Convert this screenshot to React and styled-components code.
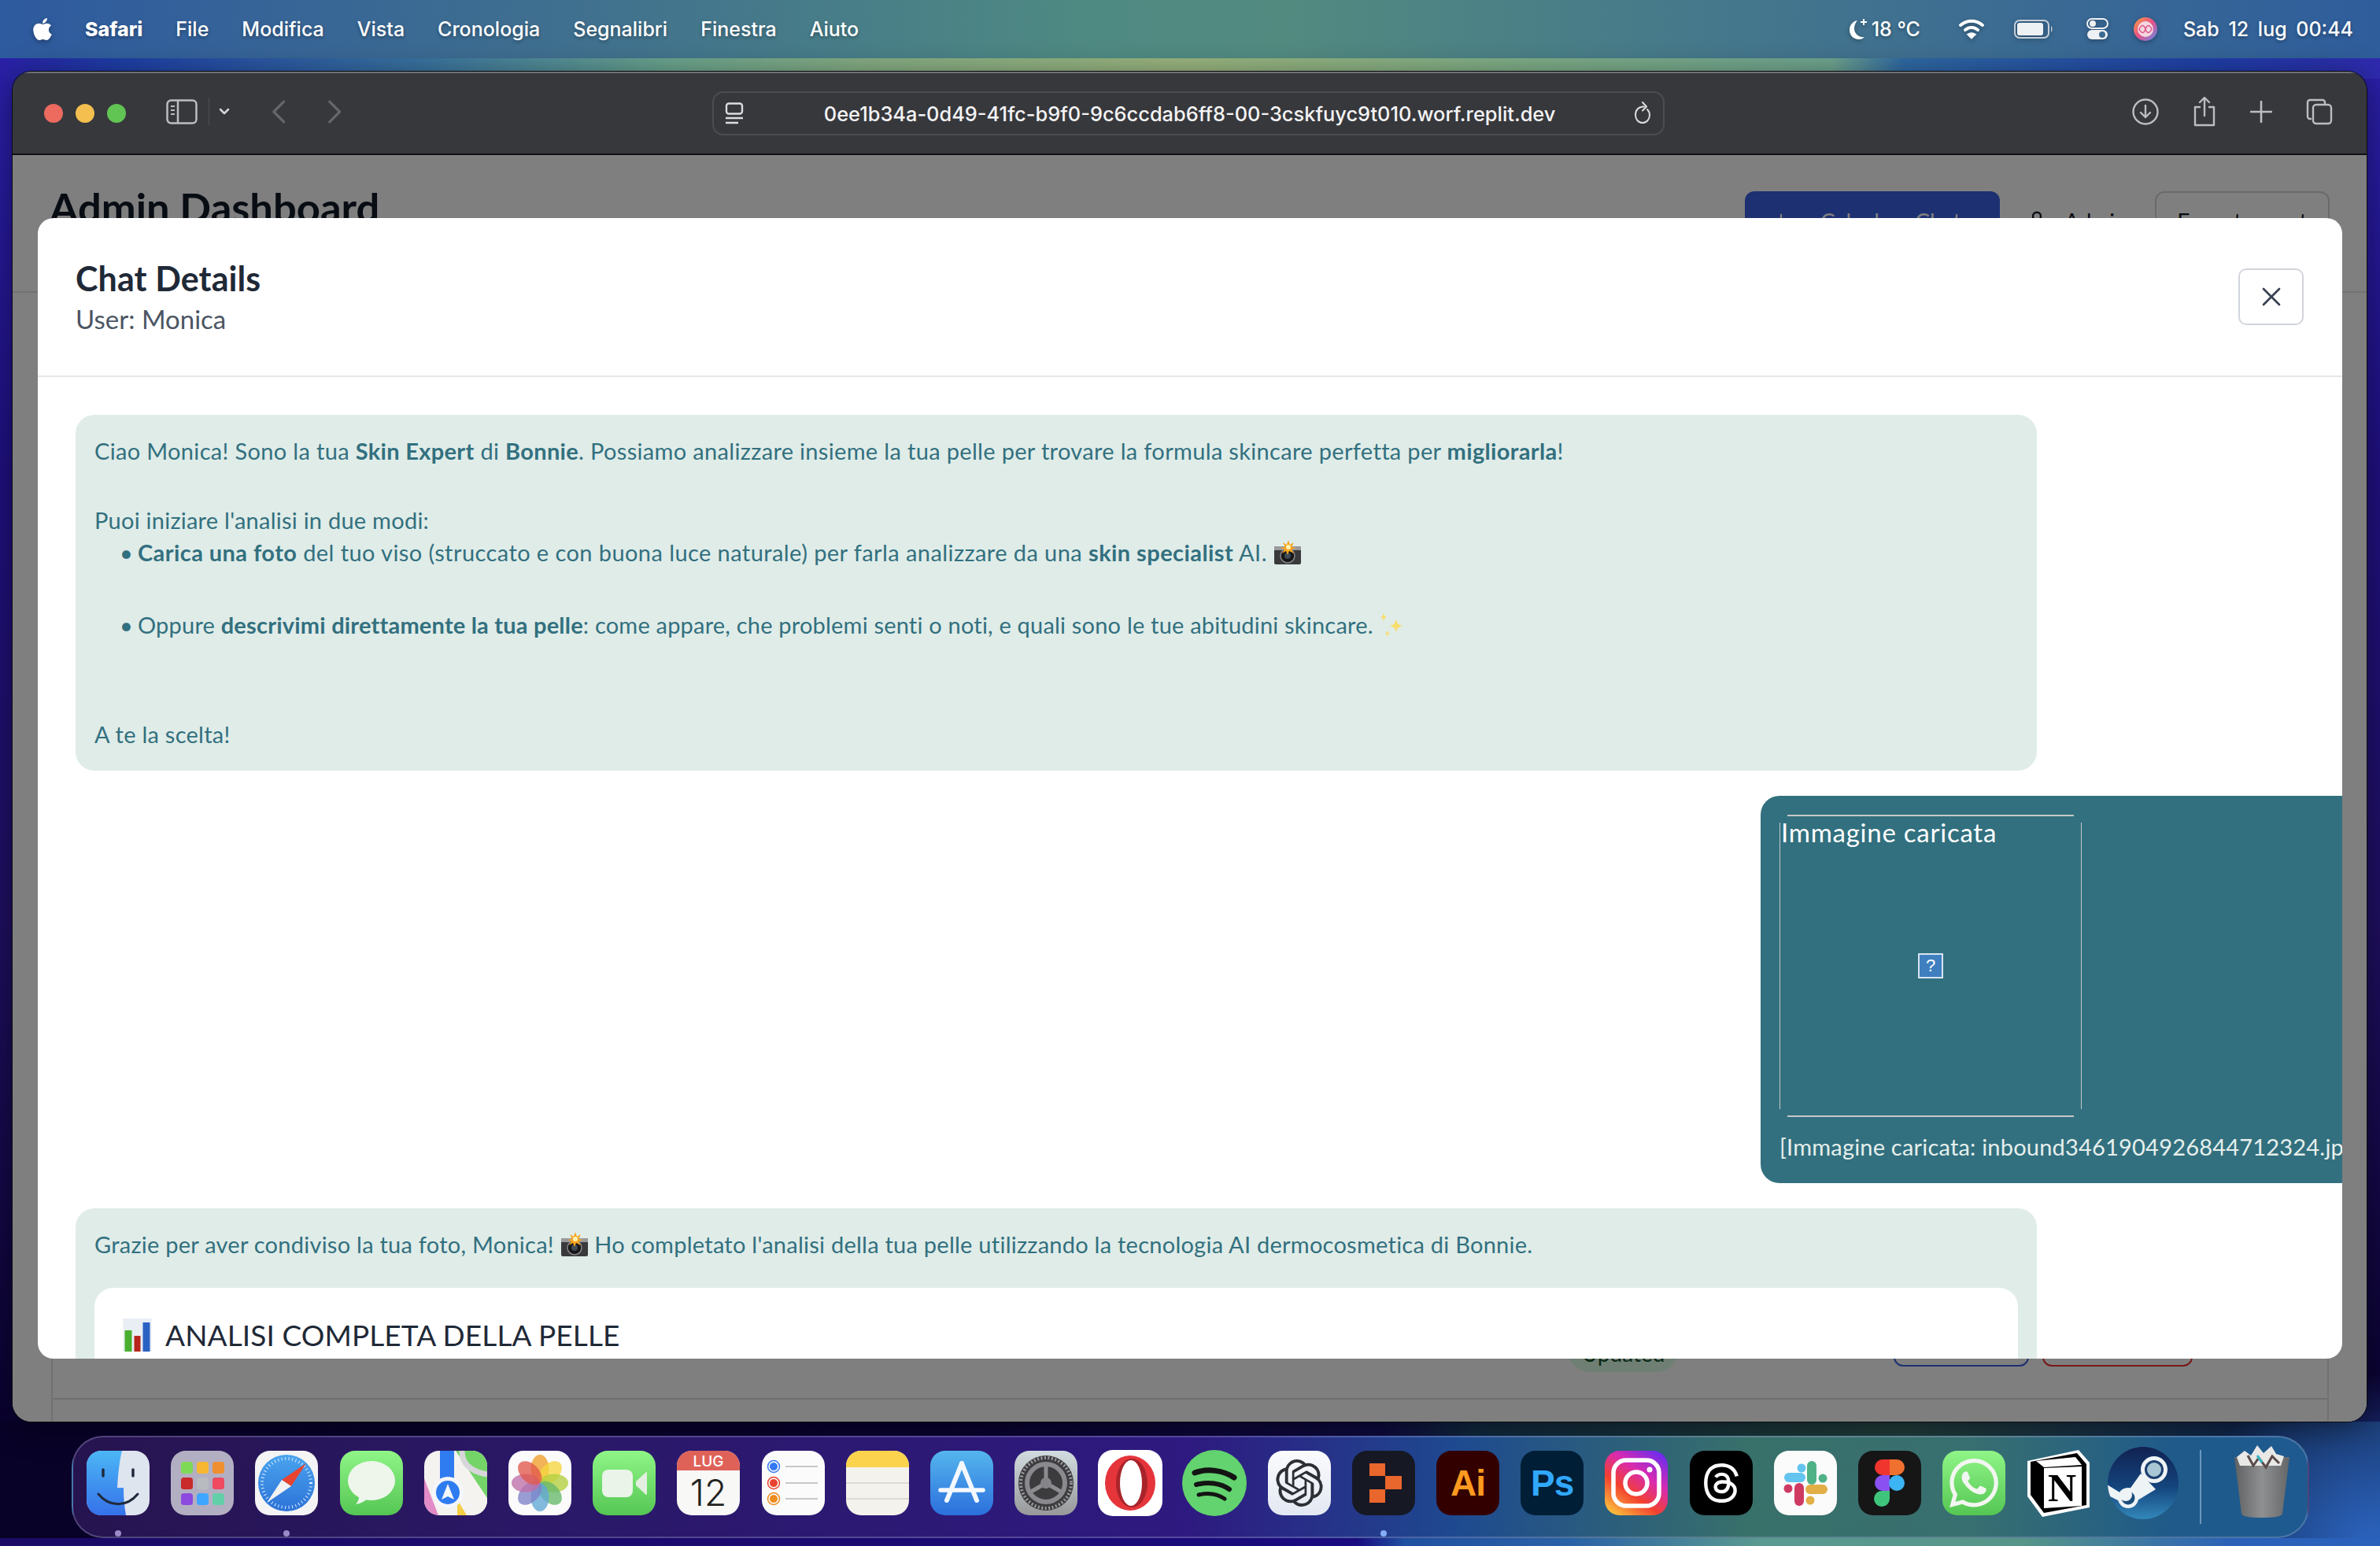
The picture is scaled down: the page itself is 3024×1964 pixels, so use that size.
import React from 'react';
import styled, { createGlobalStyle } from 'styled-components';
import { FaApple } from 'react-icons/fa';
import { SiOpenai, SiThreads, SiWhatsapp } from 'react-icons/si';
import { X, Plus, User } from 'lucide-react';

const GlobalStyle = createGlobalStyle`
  html, body { margin: 0; padding: 0; width: 3024px; height: 1964px; overflow: hidden; background: #14083f; }
  * { box-sizing: border-box; }
`;

const UI_FONT = `Inter, "Liberation Sans", sans-serif`;
const APP_FONT = `Lato, "Open Sans", sans-serif`;

// sfondo del desktop
const Desktop = styled.div`
  width: 3024px;
  height: 1964px;
  display: flex;
  flex-direction: column;
  background:
    linear-gradient(90deg, #1c0a66 0, #1b0a70 36%, #1a0c80 57%, #2050a0 59%, #2a62a6 66%, #5a9a90 74%, #579588 85%, #2a60b8 94%, #2a62bc 100%) bottom / 100% 10px no-repeat,
    radial-gradient(260px 220px at 3024px 1964px, #2a60b8 10%, rgba(42, 96, 184, 0) 100%),
    linear-gradient(90deg, #080228 0, #0a0330 40%, #0e0a3e 58%, #10283e 62%, #1a3638 75%, #203c3a 80%, #10254a 94%, #16305e 100%) bottom / 100% 158px no-repeat,
    linear-gradient(90deg, #2a1fa8 0, #1e3fa8 5%, #3a75a0 18%, #6ba58f 28%, #85ad85 36%, #9bb680 50%, #7fae88 64%, #6fa590 77%, #2f6aa5 80%, #1f3fa8 93%, #2f2ab0 100%) top / 100% 100px no-repeat,
    linear-gradient(180deg, #2a1fa8 5%, #1f1080 30%, #1f0f5f 60%, #0a0230 92%);
`;

const MenuBar = styled.div`
  height: 74px;
  flex: none;
  display: flex;
  align-items: center;
  justify-content: space-between;
  padding: 0 34px 0 38px;
  color: #fff;
  font-family: ${UI_FONT};
  font-size: 25px;
  font-weight: 500;
  text-shadow: 0 2px 4px rgba(0, 0, 0, 0.35);
  background: linear-gradient(90deg, #2e5a9f 0, #40708f 24%, #4f8a82 46%, #528a80 54%, #41728f 78%, #2f5d9c 100%);
`;
const MenuLeft = styled.div`
  display: flex;
  align-items: center;
  gap: 42px;
  svg { margin-right: -4px; filter: drop-shadow(0 2px 3px rgba(0, 0, 0, 0.35)); }
`;
const MenuItem = styled.span`
  font-weight: ${(p) => (p.$bold ? 800 : 500)};
  white-space: nowrap;
`;
const MenuRight = styled.div`
  display: flex;
  align-items: center;
  svg { flex: none; filter: drop-shadow(0 2px 3px rgba(0, 0, 0, 0.3)); }
`;
const StatusText = styled.span`
  white-space: nowrap;
  margin: ${(p) => p.$margin || 0};
  word-spacing: ${(p) => p.$spacing || 0};
`;
const StatusGap = styled.span`
  flex: none;
  width: ${(p) => p.$width}px;
`;

const Window = styled.div`
  flex: none;
  width: 2991px;
  height: 1715px;
  margin: 17px 0 0 16px;
  border-radius: 24px;
  overflow: hidden;
  display: flex;
  flex-direction: column;
  box-shadow: 0 0 0 1px #0a0a10, 0 6px 40px rgba(0, 0, 0, 0.45);
`;
const Toolbar = styled.div`
  height: 106px;
  flex: none;
  display: flex;
  align-items: center;
  background: #37383c;
  border-top: 2px solid #6f7073;
  border-bottom: 2px solid #101114;
  color: #bcbdc0;
`;
const Lights = styled.div`
  display: flex;
  gap: 16px;
  margin-left: 40px;
`;
const Light = styled.span`
  width: 24px;
  height: 24px;
  border-radius: 50%;
  background: ${(p) => p.$color};
`;
const ToolGroup = styled.div`
  display: flex;
  align-items: center;
  margin: ${(p) => p.$margin};
  gap: ${(p) => p.$gap || 0};
`;
const ToolDivider = styled.span`
  width: 1px;
  height: 34px;
  background: #4e4f53;
  margin: 0 12px 0 14px;
`;
const UrlBar = styled.div`
  width: 1210px;
  height: 56px;
  margin-left: 468px;
  flex: none;
  border: 2px solid #4c4d51;
  border-radius: 14px;
  display: flex;
  align-items: center;
  padding: 0 14px;
`;
const UrlText = styled.span`
  margin-left: 102px;
  font-family: ${UI_FONT};
  font-size: 25.4px;
  font-weight: 500;
  color: #f4f4f5;
  white-space: nowrap;
  flex: 1;
`;

const Page = styled.div`
  flex: 1;
  position: relative;
  background: #fff;
  display: flex;
  flex-direction: column;
  min-height: 0;
  font-family: ${APP_FONT};
`;
const PageHeader = styled.header`
  height: 175px;
  flex: none;
  padding: 46px 47px 0 47px;
  display: flex;
  align-items: flex-start;
  justify-content: space-between;
  border-bottom: 2px solid #e4e4e7;
`;
const PageTitle = styled.h1`
  margin: -14px 0 0;
  font-size: 52.500px;
  font-weight: 700;
  line-height: 1.3;
  color: #111827;
`;
const HeaderActions = styled.div`
  display: flex;
  align-items: center;
`;
const SolidButton = styled.div`
  width: 324px;
  height: 76px;
  border-radius: 12px;
  background: #3b60e4;
  color: #fff;
  font-size: 28px;
  display: flex;
  align-items: center;
  gap: 36px;
  padding-left: 32px;
`;
const AdminLabel = styled.div`
  width: 197px;
  display: flex;
  align-items: center;
  gap: 20px;
  padding-left: 32px;
  font-size: 28px;
  color: #111827;
`;
const OutlineButton = styled.div`
  height: 76px;
  width: 222px;
  border: 2px solid #d4d4d8;
  border-radius: 12px;
  font-size: 28px;
  color: #111827;
  display: flex;
  align-items: center;
  justify-content: center;
`;
const PageBody = styled.main`
  flex: 1;
  min-height: 0;
  padding: 0 48px 0 49px;
  display: flex;
`;
const TableCard = styled.section`
  flex: 1;
  border-left: 2px solid #e4e4e7;
  border-right: 2px solid #e4e4e7;
  display: flex;
  flex-direction: column;
  justify-content: flex-end;
`;
const TableRow = styled.div`
  display: flex;
  align-items: flex-end;
  padding: 0 171px 40px 1924px;
  height: 120px;
  margin-bottom: 28px;
  border-bottom: 2px solid #dcdce0;
`;
const StatusPill = styled.span`
  width: 143px;
  height: 62px;
  margin-bottom: -7px;
  padding-top: 13px;
  border-radius: 30px;
  background: #e0ffe8;
  color: #14532d;
  font-size: 28px;
  display: flex;
  align-items: center;
  justify-content: center;
`;
const RowButton = styled.span`
  height: 76px;
  width: ${(p) => p.$width}px;
  margin-left: ${(p) => p.$gap}px;
  border: 2px solid ${(p) => p.$color};
  border-radius: 12px;
`;

// overlay e modale
const Overlay = styled.div`
  position: absolute;
  inset: 0;
  background: rgba(0, 0, 0, 0.5);
`;
const Modal = styled.div`
  position: absolute;
  top: 80px;
  left: 32px;
  right: 31px;
  bottom: 80px;
  background: #fff;
  border-radius: 20px;
  overflow: hidden;
  display: flex;
  flex-direction: column;
`;
const ModalHeader = styled.div`
  height: 202px;
  flex: none;
  display: flex;
  align-items: center;
  justify-content: space-between;
  padding: 0 49px 0 48px;
  border-bottom: 2px solid #e5e7eb;
`;
const ModalHeading = styled.div`
  padding-top: 3px;
`;
const ModalTitle = styled.h2`
  margin: 0;
  font-size: 43px;
  font-weight: 700;
  line-height: 52px;
  letter-spacing: 0.1px;
  color: #1f2937;
`;
const ModalSub = styled.div`
  font-size: 33px;
  line-height: 50px;
  color: #4b5563;
`;
const CloseButton = styled.button`
  width: 83px;
  height: 72px;
  background: #fff;
  border: 2px solid #d1d5db;
  border-radius: 10px;
  display: flex;
  align-items: center;
  justify-content: center;
  color: #374151;
  padding: 0;
`;
const ModalBody = styled.div`
  flex: 1;
  min-height: 0;
  padding: 48px;
  display: flex;
  flex-direction: column;
  gap: 32px;
  overflow: hidden;
`;
const AssistantBubble = styled.div`
  flex: none;
  width: 2492px;
  background: #e0ece8;
  border-radius: 24px;
  padding: 24px;
  color: #32707f;
  font-size: 29px;
  line-height: 44px;
  letter-spacing: 0.25px;
  strong { font-weight: 700; }
  svg { vertical-align: -5px; }
`;
const Para = styled.p`
  margin: 0 0 ${(p) => p.$after || 0}px;
  letter-spacing: ${(p) => p.$tracking ?? 0.25}px;
`;
const BulletList = styled.ul`
  list-style: none;
  margin: -3px 0 ${(p) => p.$after || 0}px;
  padding: 0 0 0 55px;
`;
const Bullet = styled.li`
  margin-bottom: ${(p) => p.$after || 0}px;
  letter-spacing: ${(p) => p.$tracking ?? 0.25}px;
  &::before {
    content: '•';
    display: inline-block;
    width: 0;
    margin-left: -23px;
    margin-right: 23px;
  }
`;
const UserBubble = styled.div`
  flex: none;
  align-self: flex-end;
  width: 791px;
  height: 492px;
  margin-right: -100px;
  background: #32707f;
  border-radius: 24px;
  padding: 24px 24px 0 24px;
  color: #fff;
`;
// cornice dell'immagine rotta come la disegna Safari
const BrokenImage = styled.div`
  width: 384px;
  height: 384px;
  display: grid;
  background:
    linear-gradient(#c8c8c8, #c8c8c8) top center / 364px 2px no-repeat,
    linear-gradient(#c8c8c8, #c8c8c8) bottom center / 364px 2px no-repeat,
    linear-gradient(#c8c8c8, #c8c8c8) left center / 1px 364px no-repeat,
    linear-gradient(#c8c8c8, #c8c8c8) right center / 1px 364px no-repeat;
  & > * { grid-area: 1 / 1; }
`;
const AltText = styled.span`
  font-size: 33px;
  line-height: 46px;
  letter-spacing: 0.75px;
  margin: -1px 0 0 2px;
`;
const MissingIcon = styled.svg`
  width: 32px;
  height: 32px;
  place-self: center;
`;
const Caption = styled.div`
  margin-top: 16px;
  font-size: 29px;
  line-height: 44px;
  letter-spacing: 0.2px;
  white-space: nowrap;
  color: #e6efec;
`;
const ReportCard = styled.div`
  background: #fff;
  border-radius: 24px;
  margin-top: 33px;
  padding: 36px;
  height: 300px;
`;
const ReportTitle = styled.h3`
  margin: 0;
  display: flex;
  align-items: center;
  gap: 17px;
  font-size: 37px;
  font-weight: 400;
  line-height: 48px;
  letter-spacing: 0.1px;
  color: #1f2937;
`;

// dock
const Dock = styled.div`
  flex: none;
  width: 2843px;
  height: 130px;
  margin: 18px 0 0 91px;
  display: flex;
  padding-left: 17px;
  gap: 27.2px;
  border: 2px solid rgba(190, 190, 230, 0.28);
  border-radius: 40px;
  background: linear-gradient(90deg, #261450 0, #2a1866 20%, #2e1a80 50%, #1e4a90 62%, #38706a 75%, #386f70 85%, #1f5a8a 94%, #1e5a90 100%);
`;
const DockItem = styled.div`
  flex: none;
  width: 80px;
  height: 130px;
  padding-top: 17px;
  display: flex;
  flex-direction: column;
  align-items: center;
  svg { overflow: visible; }
`;
const Tile = styled.div`
  width: 80px;
  height: 82px;
  flex: none;
  border-radius: 19px;
  background: ${(p) => p.$bg};
  display: flex;
  align-items: center;
  justify-content: center;
  overflow: hidden;
`;
const TileLabel = styled.span`
  font-family: "Liberation Sans", sans-serif;
  font-weight: 700;
  font-size: 46px;
  color: ${(p) => p.$color};
  letter-spacing: -1px;
`;
const RunDot = styled.span`
  width: 8px;
  height: 8px;
  margin-top: 19px;
  border-radius: 50%;
  background: ${(p) => p.$color || '#9b8ac8'};
`;
const DockDivider = styled.span`
  flex: none;
  width: 2px;
  height: 94px;
  align-self: center;
  background: rgba(170, 200, 230, 0.55);
  margin: 0 10px 0 5px;
`;

// icone barra menu e toolbar
const MoonIcon = () => (
  <svg width="30" height="34" viewBox="0 0 30 34">
    <path d="M14 6c-6 1-10 6-10 12 0 7 5 12 12 12 3 0 5-1 7-3-7 1-13-4-13-11 0-4 2-8 4-10z" fill="#fff" />
    <path d="M22 4v8M18 8h8" stroke="#fff" strokeWidth="2" />
  </svg>
);
const WifiIcon = () => (
  <svg width="34" height="28" viewBox="0 0 34 28" fill="none" stroke="#fff" strokeWidth="4" strokeLinecap="round">
    <path d="M3 9c8-7 20-7 28 0" />
    <path d="M9 15c5-4 11-4 16 0" />
    <path d="M17 24l-3-3c2-1 4-1 6 0z" fill="#fff" />
  </svg>
);
const BatteryIcon = () => (
  <svg width="50" height="24" viewBox="0 0 50 24">
    <rect x="1" y="1" width="43" height="22" rx="6" fill="none" stroke="#c5ced8" strokeWidth="2" />
    <rect x="4" y="4" width="33" height="16" rx="3" fill="#eef1f4" />
    <path d="M47 8c2 1 2 7 0 8z" fill="#c5ced8" />
  </svg>
);
const ControlIcon = () => (
  <svg width="30" height="28" viewBox="0 0 30 28">
    <rect x="2" y="1" width="26" height="12" rx="6" fill="none" stroke="#eef1f4" strokeWidth="2" />
    <circle cx="9" cy="7" r="4" fill="#eef1f4" />
    <rect x="2" y="15" width="26" height="12" rx="6" fill="#eef1f4" />
    <circle cx="21" cy="21" r="4" fill="#3b6a92" />
  </svg>
);
const SiriIcon = () => (
  <svg width="30" height="30" viewBox="0 0 30 30">
    <defs>
      <linearGradient id="siri" x1="0" y1="0" x2="1" y2="1">
        <stop offset="0" stopColor="#f6a13a" />
        <stop offset="0.5" stopColor="#ea4f8b" />
        <stop offset="1" stopColor="#5a8ff0" />
      </linearGradient>
    </defs>
    <circle cx="15" cy="15" r="15" fill="url(#siri)" />
    <circle cx="15" cy="15" r="10" fill="#f4d8e0" />
    <path d="M7 15c3-6 6-6 8 0s5 6 8 0c-3-6-6-6-8 0s-5 6-8 0z" fill="none" stroke="#e2568c" strokeWidth="1.500" />
  </svg>
);
const SidebarIcon = () => (
  <svg width="40" height="32" viewBox="0 0 40 32" fill="none" stroke="#bcbdc0" strokeWidth="2.5">
    <rect x="1.5" y="1.5" width="37" height="29" rx="5" />
    <path d="M15 2v28" />
    <path d="M6 9h5M6 14h5M6 19h5" strokeWidth="2" />
  </svg>
);
const Chevron = ({ dir, color = '#66676b', size = 28 }) => (
  <svg width={size * 0.7} height={size} viewBox="0 0 14 20" fill="none" stroke={color} strokeWidth="2" strokeLinecap="round" strokeLinejoin="round">
    <path d={dir === 'left' ? 'M11 2L3 10l8 8' : 'M3 2l8 8-8 8'} />
  </svg>
);
const SmallDown = () => (
  <svg width="14" height="10" viewBox="0 0 14 10" fill="none" stroke="#d4d5d7" strokeWidth="2.5" strokeLinecap="round" strokeLinejoin="round">
    <path d="M2 2l5 5 5-5" />
  </svg>
);
const ReaderIcon = () => (
  <svg width="24" height="28" viewBox="0 0 24 28" fill="none" stroke="#dcdcdd" strokeWidth="2.4">
    <rect x="2" y="1.5" width="20" height="13" rx="3" />
    <path d="M1 20h22M1 26h16" />
  </svg>
);
const ReloadIcon = () => (
  <svg width="24" height="30" viewBox="0 0 24 30" fill="none" stroke="#dcdcdd" strokeWidth="2" strokeLinecap="round" strokeLinejoin="round" style={{ flex: 'none' }}>
    <path d="M14 6.500C7 6 3 11 3 17c0 6 4 10 9 10s9-4 9-10c0-3-1-5-3-7" />
    <path d="M12 1l5 5.500-5 5" />
  </svg>
);
const DownloadIcon = () => (
  <svg width="34" height="34" viewBox="0 0 34 34" fill="none" stroke="#bcbdc0" strokeWidth="2.4" strokeLinecap="round" strokeLinejoin="round">
    <circle cx="17" cy="17" r="15.5" />
    <path d="M17 9v15M11 18l6 6 6-6" />
  </svg>
);
const ShareIcon = () => (
  <svg width="30" height="38" viewBox="0 0 30 38" fill="none" stroke="#bcbdc0" strokeWidth="2.4" strokeLinecap="round" strokeLinejoin="round">
    <path d="M9 13H3v23h24V13h-6" />
    <path d="M15 24V2M9 7l6-6 6 6" />
  </svg>
);
const PlusIcon = () => (
  <svg width="28" height="28" viewBox="0 0 28 28" stroke="#bcbdc0" strokeWidth="2.6" strokeLinecap="round">
    <path d="M14 1v26M1 14h26" />
  </svg>
);
const TabsIcon = () => (
  <svg width="34" height="34" viewBox="0 0 34 34" fill="none" stroke="#bcbdc0" strokeWidth="2.4" strokeLinejoin="round">
    <path d="M7 26H5a3 3 0 0 1-3-3V5a3 3 0 0 1 3-3h16a3 3 0 0 1 3 3v2" />
    <rect x="9" y="8" width="23" height="24" rx="4" />
  </svg>
);

// emoji disegnati perché nel sandbox non c'è un font a colori
const CameraEmoji = () => (
  <svg width="36" height="32" viewBox="0 0 36 32">
    <rect x="1" y="8" width="34" height="23" rx="2" fill="#3a3a3c" />
    <rect x="1" y="8" width="34" height="5" fill="#9a9a9c" />
    <circle cx="18" cy="20" r="9" fill="#17171a" stroke="#86868a" strokeWidth="1.5" />
    <circle cx="18" cy="20" r="4" fill="#3e4a55" />
    <path d="M19 0l2 6 5-3-3 6 6 1-6 2 3 5-6-3-2 5-2-5-5 3 3-5-5-2 6-1-3-6 5 3z" fill="#f8a51c" />
    <circle cx="19" cy="9" r="3" fill="#fff3b0" />
  </svg>
);
const SparkleEmoji = () => (
  <svg width="34" height="32" viewBox="0 0 34 32" fill="#f9dd6e">
    <path d="M22 8c1 6 3 8 9 9-6 1-8 3-9 9-1-6-3-8-9-9 6-1 8-3 9-9z" />
    <path d="M6 0c.5 4 1.500 5 4 6-2.500.5-3.500 2-4 6-.5-4-1.500-5.500-4-6 2.500-1 3.500-2 4-6z" />
    <path d="M11 22c.4 3 1 4 3 5-2 .4-2.600 1-3 5-.4-4-1-4.600-3-5 2-1 2.600-2 3-5z" />
  </svg>
);
const ChartEmoji = () => (
  <svg width="37" height="42" viewBox="0 0 36 42" style={{ flex: 'none' }}>
    <rect width="36" height="42" fill="#e8eef4" />
    <rect x="2" y="15" width="9" height="27" fill="#49b02f" />
    <rect x="14" y="22" width="8" height="20" fill="#b8241c" />
    <rect x="25" y="5" width="9" height="37" fill="#2a62c4" />
  </svg>
);

// icone del dock
const FinderIcon = () => (
  <svg width="80" height="82" viewBox="0 0 80 82">
    <defs>
      <linearGradient id="finderBlue" x1="0" y1="0" x2="0" y2="1">
        <stop offset="0" stopColor="#4cb6f5" />
        <stop offset="1" stopColor="#3571ea" />
      </linearGradient>
    </defs>
    <rect width="80" height="82" rx="19" fill="#dfe5ef" />
    <path d="M19 0h26c-3 12-5 28-6 47h8c0 12 1 24 3 35H19C8 82 0 74 0 63V19C0 8 8 0 19 0z" fill="url(#finderBlue)" />
    <path d="M21 24v8M59 24v8" stroke="#1f2a3c" strokeWidth="3.5" strokeLinecap="round" />
    <path d="M15 55c14 17 36 17 50 0" fill="none" stroke="#1f2a3c" strokeWidth="3" strokeLinecap="round" />
  </svg>
);
const LaunchpadIcon = () => {
  const colors = ['#7ed957', '#f7b731', '#ef8f2f', '#c92a2a', '#b8bcc0', '#ef4a5f', '#8c4adf', '#3ea6ff', '#63cfa8'];
  return (
    <svg width="80" height="82" viewBox="0 0 80 82">
      <rect width="80" height="82" rx="19" fill="#b3afc2" />
      {colors.map((c, i) => (
        <rect key={c} x={13 + (i % 3) * 20} y={14 + Math.floor(i / 3) * 20} width="15" height="15" rx="3.500" fill={c} />
      ))}
    </svg>
  );
};
const SafariIcon = () => (
  <svg width="80" height="82" viewBox="0 0 80 82">
    <defs>
      <linearGradient id="safariBlue" x1="0" y1="0" x2="0" y2="1">
        <stop offset="0" stopColor="#4aa4ee" />
        <stop offset="1" stopColor="#2c72d8" />
      </linearGradient>
    </defs>
    <rect width="80" height="82" rx="19" fill="#f4f4f4" />
    <ellipse cx="40" cy="41" rx="36" ry="36" fill="url(#safariBlue)" />
    <circle cx="40" cy="41" r="31" fill="none" stroke="#dceeff" strokeWidth="4" strokeDasharray="1 3.500" />
    <path d="M65 16L34 37l12 8z" fill="#e8432e" />
    <path d="M15 66l31-21-12-8z" fill="#f2f2f2" />
  </svg>
);
const MessagesIcon = () => (
  <svg width="80" height="82" viewBox="0 0 80 82">
    <defs>
      <linearGradient id="greenTile" x1="0" y1="0" x2="0" y2="1">
        <stop offset="0" stopColor="#8ff587" />
        <stop offset="1" stopColor="#55c653" />
      </linearGradient>
    </defs>
    <rect width="80" height="82" rx="19" fill="url(#greenTile)" />
    <ellipse cx="40" cy="38" rx="30" ry="25" fill="#eef6ec" />
    <path d="M25 55c-1 6-2 10-5 13 6-1 12-4 16-8z" fill="#eef6ec" />
  </svg>
);
const MapsIcon = () => (
  <svg width="80" height="82" viewBox="0 0 80 82">
    <defs>
      <clipPath id="mapsClip"><rect width="80" height="82" rx="19" /></clipPath>
    </defs>
    <g clipPath="url(#mapsClip)">
      <rect width="80" height="82" fill="#f4f3f0" />
      <path d="M40 0h40v60z" fill="#74d468" />
      <path d="M0 35l18 47H0z" fill="#e28bc7" />
      <path d="M42 60h38v22H42z" fill="#f4f3f0" />
      <path d="M42 62l12 20H42z" fill="#f6ce44" />
      <rect x="20" y="0" width="18" height="44" fill="#2f7cf0" />
      <path d="M48 0c0 14 8 26 32 30" fill="none" stroke="#d6d6da" strokeWidth="7" />
      <circle cx="30" cy="53" r="20" fill="#f4f6fa" />
      <circle cx="30" cy="53" r="15" fill="#2f7cf0" />
      <path d="M30 42l8 20-8-4-8 4z" fill="#f4f6fa" />
    </g>
  </svg>
);
const PhotosIcon = () => {
  const petals = ['#f09f2c', '#f5d63f', '#b4cf3e', '#66b86a', '#62a7d5', '#7d81c6', '#bf6fa9', '#e2584b'];
  return (
    <svg width="80" height="82" viewBox="0 0 80 82">
      <rect width="80" height="82" rx="19" fill="#fbfbfb" />
      {petals.map((c, i) => (
        <ellipse key={c} cx="40" cy="23" rx="11.500" ry="18" fill={c} opacity="0.78" transform={`rotate(${i * 45} 40 41)`} />
      ))}
    </svg>
  );
};
const FaceTimeIcon = () => (
  <svg width="80" height="82" viewBox="0 0 80 82">
    <rect width="80" height="82" rx="19" fill="url(#greenTile)" />
    <rect x="12" y="24" width="39" height="35" rx="8" fill="#eaf4e8" />
    <path d="M55 39l13-12c1 0 1 1 1 2v25c0 1 0 2-1 2L55 44z" fill="#e2efe0" />
  </svg>
);
const CalendarIcon = () => (
  <svg width="80" height="82" viewBox="0 0 80 82">
    <defs>
      <clipPath id="calClip"><rect width="80" height="82" rx="19" /></clipPath>
    </defs>
    <g clipPath="url(#calClip)">
      <rect width="80" height="82" fill="#f8f8f6" />
      <rect width="80" height="25" fill="#df6259" />
    </g>
    <text x="40" y="20" textAnchor="middle" fontFamily="Inter, sans-serif" fontSize="19" fontWeight="500" fill="#fff">LUG</text>
    <text x="40" y="70" textAnchor="middle" fontFamily="Inter, sans-serif" fontSize="46" fontWeight="300" fill="#222">12</text>
  </svg>
);
const RemindersIcon = () => (
  <svg width="80" height="82" viewBox="0 0 80 82">
    <rect width="80" height="82" rx="19" fill="#fbfbfb" />
    {[['#3478f6', 20], ['#e8432e', 41], ['#ee8c1d', 61]].map(([c, y]) => (
      <g key={c}>
        <circle cx="15" cy={y} r="5.500" fill={c} stroke="#fff" strokeWidth="1" />
        <circle cx="15" cy={y} r="7.500" fill="none" stroke={c} strokeWidth="1.500" />
        <rect x="30" y={y - 1} width="41" height="2" fill="#c8c8ca" />
      </g>
    ))}
  </svg>
);
const NotesIcon = () => (
  <svg width="80" height="82" viewBox="0 0 80 82">
    <defs>
      <clipPath id="notesClip"><rect width="80" height="82" rx="19" /></clipPath>
    </defs>
    <g clipPath="url(#notesClip)">
      <rect width="80" height="82" fill="#f4f2ec" />
      <rect width="80" height="21" fill="#fbd34c" />
      <path d="M0 41h80M0 61h80" stroke="#d6d4ce" strokeWidth="1.500" />
    </g>
  </svg>
);
const AppStoreIcon = () => (
  <svg width="80" height="82" viewBox="0 0 80 82">
    <defs>
      <linearGradient id="appStore" x1="0" y1="0" x2="0" y2="1">
        <stop offset="0" stopColor="#55b6ee" />
        <stop offset="1" stopColor="#2b6fdc" />
      </linearGradient>
    </defs>
    <rect width="80" height="82" rx="19" fill="url(#appStore)" />
    <g stroke="#f4f8ff" strokeLinecap="round" strokeWidth="6">
      <path d="M40 16l-19 47" />
      <path d="M40 16l19 47" />
      <path d="M13 50h54" strokeWidth="5.500" />
    </g>
  </svg>
);
const SettingsIcon = () => (
  <svg width="80" height="82" viewBox="0 0 80 82">
    <defs>
      <linearGradient id="settingsBg" x1="0" y1="0" x2="0" y2="1">
        <stop offset="0" stopColor="#d2dce0" />
        <stop offset="1" stopColor="#97989a" />
      </linearGradient>
    </defs>
    <rect width="80" height="82" rx="19" fill="url(#settingsBg)" />
    <circle cx="40" cy="41" r="35" fill="#3c3c3f" />
    <circle cx="40" cy="41" r="32" fill="none" stroke="#9c9ca0" strokeWidth="4" strokeDasharray="2 2.500" />
    <circle cx="40" cy="41" r="24" fill="none" stroke="#8a8a8e" strokeWidth="6" />
    <path d="M40 41V19M40 41L21 52M40 41l19 11" stroke="#8c8c90" strokeWidth="5" />
    <circle cx="40" cy="41" r="7" fill="#858589" />
  </svg>
);
const OperaIcon = () => (
  <svg width="80" height="82" viewBox="0 0 80 82">
    <rect x="-1" y="-1" width="82" height="84" rx="19" fill="#fff" />
    <ellipse cx="40" cy="41" rx="32" ry="35" fill="#e5353b" />
    <ellipse cx="42" cy="41" rx="20" ry="31" fill="#a8242a" />
    <ellipse cx="41" cy="41" rx="14" ry="29" fill="#fff" />
  </svg>
);
const SpotifyIcon = () => (
  <svg width="80" height="82" viewBox="0 0 80 82">
    <ellipse cx="40" cy="41" rx="41" ry="42" fill="#62d36e" />
    <g fill="none" stroke="#141414" strokeLinecap="round">
      <path d="M15 28c17-6 36-3 50 6" strokeWidth="7" />
      <path d="M17 43c15-4 31-2 42 6" strokeWidth="6" />
      <path d="M20 56c12-3 24-1 33 5" strokeWidth="5" />
    </g>
  </svg>
);
const ReplitIcon = () => (
  <svg width="80" height="82" viewBox="0 0 80 82">
    <rect width="80" height="82" rx="19" fill="#161824" />
    <path d="M22 16h20v16H22zM42 32h21v17H42zM22 49h20v17H22z" fill="#e9662c" />
  </svg>
);
const InstagramIcon = () => (
  <svg width="80" height="82" viewBox="0 0 80 82">
    <defs>
      <linearGradient id="insta" x1="0.15" y1="1" x2="0.85" y2="0">
        <stop offset="0" stopColor="#fcc23d" />
        <stop offset="0.35" stopColor="#f2402f" />
        <stop offset="0.65" stopColor="#d82bb0" />
        <stop offset="1" stopColor="#6b2cf0" />
      </linearGradient>
    </defs>
    <rect width="80" height="82" rx="19" fill="url(#insta)" />
    <rect x="11" y="12" width="58" height="58" rx="16" fill="none" stroke="#fff" strokeWidth="5.500" />
    <circle cx="40" cy="41" r="14" fill="none" stroke="#fff" strokeWidth="5.500" />
    <circle cx="57" cy="24" r="3.500" fill="#fff" />
  </svg>
);
const SlackIcon = () => (
  <svg width="80" height="82" viewBox="0 0 80 82">
    <rect width="80" height="82" rx="19" fill="#fbfbfb" />
    <g strokeLinecap="round" fill="none" strokeWidth="12">
      <path d="M19 34h15" stroke="#63c4ef" />
      <path d="M35 22h0" stroke="#63c4ef" strokeWidth="11" />
      <path d="M48 19v18" stroke="#4fb287" />
      <path d="M62 35h0" stroke="#4fb287" strokeWidth="11" />
      <path d="M46 49h16" stroke="#e2ae45" />
      <path d="M46 63h0" stroke="#e2ae45" strokeWidth="11" />
      <path d="M32 47v17" stroke="#cf3a63" />
      <path d="M18 48h0" stroke="#cf3a63" strokeWidth="11" />
    </g>
  </svg>
);
const FigmaIcon = () => (
  <svg width="80" height="82" viewBox="0 0 80 82">
    <rect width="80" height="82" rx="19" fill="#161616" />
    <path d="M40 11H31a10 10 0 0 0 0 20h9z" fill="#f0352e" />
    <path d="M40 11h9a10 10 0 0 1 0 20h-9z" fill="#f0702f" />
    <path d="M40 31H31a10 10 0 0 0 0 20h9z" fill="#8a50f2" />
    <circle cx="49" cy="41" r="10" fill="#3db4f4" />
    <path d="M31 51h9v10a10 10 0 1 1-9-10z" fill="#3fc47c" />
  </svg>
);
const NotionIcon = () => (
  <svg width="80" height="82" viewBox="0 0 80 82">
    <path d="M1 13L66-1l14 16v57L20 84 1 58z" fill="#fff" />
    <path d="M5 14l59-11 12 14v52L22 79 5 56z" fill="#000" />
    <path d="M22 22l48-2v50l-48 3z" fill="#fff" />
    <path d="M12 13l50-5 8 10-48 3z" fill="#fff" />
    <text x="45" y="64" textAnchor="middle" fontFamily="Liberation Serif, serif" fontWeight="700" fontSize="50" fill="#000">N</text>
  </svg>
);
const SteamIcon = () => (
  <svg width="80" height="82" viewBox="0 0 80 82">
    <defs>
      <linearGradient id="steamBg" x1="0" y1="0" x2="0" y2="1">
        <stop offset="0" stopColor="#112252" />
        <stop offset="0.55" stopColor="#14447c" />
        <stop offset="1" stopColor="#3388bb" />
      </linearGradient>
      <clipPath id="steamClip"><ellipse cx="40" cy="41" rx="45" ry="46" /></clipPath>
    </defs>
    <ellipse cx="40" cy="41" rx="45" ry="46" fill="url(#steamBg)" />
    <g clipPath="url(#steamClip)">
      <path d="M-6 43l23 14 20-28 19 20-33 20-9-3-20-10z" fill="#eef3f6" />
      <circle cx="54" cy="24" r="17" fill="#eef3f6" />
      <circle cx="54" cy="24" r="12" fill="#1c3f6f" />
      <circle cx="54" cy="24" r="9" fill="#a9c6d4" />
      <circle cx="21" cy="60" r="13" fill="#eef3f6" />
      <circle cx="21" cy="60" r="8.500" fill="#1c4d7a" />
      <circle cx="18" cy="56" r="8" fill="#eef3f6" />
    </g>
  </svg>
);
const TrashIcon = () => (
  <svg width="80" height="94" viewBox="0 0 80 94" style={{ marginTop: -8 }}>
    <defs>
      <linearGradient id="trashBody" x1="0" y1="0" x2="1" y2="0">
        <stop offset="0" stopColor="#5f6163" />
        <stop offset="0.5" stopColor="#8e9092" />
        <stop offset="1" stopColor="#646668" />
      </linearGradient>
    </defs>
    <path d="M5 16h70l-9 72c-1 4-12 5-26 5s-25-1-26-5z" fill="url(#trashBody)" />
    <path d="M8 16l10-8 8 6 8-13 8 10 10-9 6 10 10 3-4 12H12z" fill="#e8e8e6" />
    <path d="M22 14l7 13 7-10 9 12 8-14 9 9" stroke="#5a4a4a" strokeWidth="3" fill="none" />
    <path d="M34 14l6 9" stroke="#38b6c8" strokeWidth="3" />
  </svg>
);

const DockIcons = [
  { el: <FinderIcon />, dot: '#9b8ac8' },
  { el: <LaunchpadIcon /> },
  { el: <SafariIcon />, dot: '#9b8ac8' },
  { el: <MessagesIcon /> },
  { el: <MapsIcon /> },
  { el: <PhotosIcon /> },
  { el: <FaceTimeIcon /> },
  { el: <CalendarIcon /> },
  { el: <RemindersIcon /> },
  { el: <NotesIcon /> },
  { el: <AppStoreIcon /> },
  { el: <SettingsIcon /> },
  { el: <OperaIcon /> },
  { el: <SpotifyIcon /> },
  { el: <Tile $bg="linear-gradient(180deg,#fbfbfd,#e2e8f2)"><SiOpenai size={60} color="#2c2f33" /></Tile> },
  { el: <ReplitIcon />, dot: '#84aef5' },
  { el: <Tile $bg="#330000"><TileLabel $color="#ff9a1f">Ai</TileLabel></Tile> },
  { el: <Tile $bg="#001e36"><TileLabel $color="#31a8ff">Ps</TileLabel></Tile> },
  { el: <InstagramIcon /> },
  { el: <Tile $bg="#000"><SiThreads size={50} color="#fff" /></Tile> },
  { el: <SlackIcon /> },
  { el: <FigmaIcon /> },
  { el: <Tile $bg="linear-gradient(180deg,#8ff587,#55c653)"><SiWhatsapp size={62} color="#f2f6f1" /></Tile> },
  { el: <NotionIcon /> },
  { el: <SteamIcon /> },
];

export default function App() {
  const menus = ['File', 'Modifica', 'Vista', 'Cronologia', 'Segnalibri', 'Finestra', 'Aiuto'];
  return (
    <Desktop>
      <GlobalStyle />
      <MenuBar>
        <MenuLeft>
          <FaApple size={32} />
          <MenuItem $bold>Safari</MenuItem>
          {menus.map((m) => <MenuItem key={m}>{m}</MenuItem>)}
        </MenuLeft>
        <MenuRight>
          <MoonIcon />
          <StatusText $margin="0 48px 0 2px">18 °C</StatusText>
          <WifiIcon />
          <StatusGap $width={37} />
          <BatteryIcon />
          <StatusGap $width={41} />
          <ControlIcon />
          <StatusGap $width={31} />
          <SiriIcon />
          <StatusText $margin="0 0 0 33px" $spacing="5px">Sab 12 lug 00:44</StatusText>
        </MenuRight>
      </MenuBar>

      <Window>
        <Toolbar>
          <Lights>
            <Light $color="#ed6a5e" />
            <Light $color="#f4bf4f" />
            <Light $color="#61c554" />
          </Lights>
          <ToolGroup $margin="-4px 0 0 51px">
            <SidebarIcon />
            <ToolDivider />
            <SmallDown />
          </ToolGroup>
          <ToolGroup $margin="-4px 0 0 51px" $gap="49px">
            <Chevron dir="left" size={32} />
            <Chevron dir="right" size={32} />
          </ToolGroup>
          <UrlBar>
            <ReaderIcon />
            <UrlText>0ee1b34a-0d49-41fc-b9f0-9c6ccdab6ff8-00-3cskfuyc9t010.worf.replit.dev</UrlText>
            <ReloadIcon />
          </UrlBar>
          <ToolGroup $margin="-4px 0 0 594px" $gap="43px">
            <DownloadIcon />
            <ShareIcon />
            <PlusIcon />
            <TabsIcon />
          </ToolGroup>
        </Toolbar>

        <Page>
          <PageHeader>
            <PageTitle>Admin Dashboard</PageTitle>
            <HeaderActions>
              <SolidButton><Plus size={28} />Calcolare Chat</SolidButton>
              <AdminLabel><User size={30} />Admin</AdminLabel>
              <OutlineButton>Export report</OutlineButton>
            </HeaderActions>
          </PageHeader>
          <PageBody>
            <TableCard>
              <TableRow>
                <StatusPill>Updated</StatusPill>
                <RowButton $width={172} $gap={272} $color="#3b60e4" />
                <RowButton $width={191} $gap={17} $color="#f03030" />
              </TableRow>
            </TableCard>
          </PageBody>

          <Overlay />
          <Modal>
            <ModalHeader>
              <ModalHeading>
                <ModalTitle>Chat Details</ModalTitle>
                <ModalSub>User: Monica</ModalSub>
              </ModalHeading>
              <CloseButton><X size={40} strokeWidth={1.6} /></CloseButton>
            </ModalHeader>
            <ModalBody>
              <AssistantBubble>
                <Para $after={44} $tracking={0.33}>
                  Ciao Monica! Sono la tua <strong>Skin Expert</strong> di <strong>Bonnie</strong>. Possiamo analizzare insieme la tua pelle per trovare la formula skincare perfetta per <strong>migliorarla</strong>!
                </Para>
                <Para>Puoi iniziare l'analisi in due modi:</Para>
                <BulletList $after={95}>
                  <Bullet $after={48} $tracking={0.42}>
                    <strong>Carica una foto</strong> del tuo viso (struccato e con buona luce naturale) per farla analizzare da una <strong>skin specialist</strong> AI. <CameraEmoji />
                  </Bullet>
                  <Bullet $tracking={0.2}>
                    Oppure <strong>descrivimi direttamente la tua pelle</strong>: come appare, che problemi senti o noti, e quali sono le tue abitudini skincare. <SparkleEmoji />
                  </Bullet>
                </BulletList>
                <Para>A te la scelta!</Para>
              </AssistantBubble>

              <UserBubble>
                <BrokenImage>
                  <AltText>Immagine caricata</AltText>
                  <MissingIcon viewBox="0 0 32 32">
                    <rect x="1" y="1" width="30" height="30" fill="#3f7fc0" stroke="#d8e4f2" strokeWidth="2" />
                    <text x="16" y="23" textAnchor="middle" fontFamily="Liberation Sans, sans-serif" fontSize="22" fill="#fff">?</text>
                  </MissingIcon>
                </BrokenImage>
                <Caption>[Immagine caricata: inbound3461904926844712324.jpg]</Caption>
              </UserBubble>

              <AssistantBubble>
                <Para>
                  Grazie per aver condiviso la tua foto, Monica! <CameraEmoji /> Ho completato l'analisi della tua pelle utilizzando la tecnologia AI dermocosmetica di Bonnie.
                </Para>
                <ReportCard>
                  <ReportTitle><ChartEmoji />ANALISI COMPLETA DELLA PELLE</ReportTitle>
                </ReportCard>
              </AssistantBubble>
            </ModalBody>
          </Modal>
        </Page>
      </Window>

      <Dock>
        {DockIcons.map((d, i) => (
          <DockItem key={i}>
            {d.el}
            {d.dot && <RunDot $color={d.dot} />}
          </DockItem>
        ))}
        <DockDivider />
        <DockItem><TrashIcon /></DockItem>
      </Dock>
    </Desktop>
  );
}
